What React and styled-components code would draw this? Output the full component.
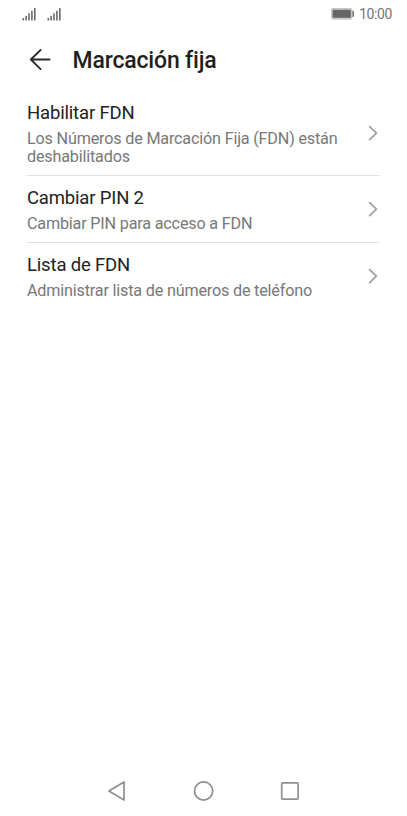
import React from 'react'
import styled, { createGlobalStyle } from 'styled-components'

const items = [
  {
    title: 'Habilitar FDN',
    text: 'Los Números de Marcación Fija (FDN) están deshabilitados',
    height: 84,
  },
  {
    title: 'Cambiar PIN 2',
    text: 'Cambiar PIN para acceso a FDN',
    height: 67,
  },
  {
    title: 'Lista de FDN',
    text: 'Administrar lista de números de teléfono',
    height: 67,
  },
]

const Signal = () => (
  <svg width='14' height='13' viewBox='0 0 14 13' fill='#6a6a6a'>
    <rect x='0.5' y='10' width='1.6' height='2.5' />
    <rect x='3.3' y='7.8' width='1.6' height='4.7' />
    <rect x='6.2' y='5.3' width='1.6' height='7.2' />
    <rect x='9.1' y='2.8' width='1.6' height='9.7' />
    <rect x='12' y='0.1' width='1.6' height='12.4' />
  </svg>
)

const Battery = () => (
  <svg width='24' height='12' viewBox='0 0 24 12'>
    <rect x='0.5' y='0.5' width='20.5' height='10.6' rx='1.5' fill='#ccc' stroke='#c4c4c4' />
    <rect x='1.7' y='1.8' width='18.1' height='8' fill='#666' />
    <rect x='21.4' y='3' width='1.6' height='5.8' fill='#777' />
  </svg>
)

const App = () => {
  return (
    <>
      <GlobalStyle />
      <Screen>
        <StatusBar>
          <Signals>
            <Signal />
            <Signal />
          </Signals>
          <Clock>
            <Battery />
            <span>10:00</span>
          </Clock>
        </StatusBar>

        <Header>
          <BackButton aria-label='Atrás'>
            <svg width='22' height='22' viewBox='0 0 22 22'>
              <path d='M20.6 10.5H1.8M11.6 1L1.8 10.5l9.8 9.6' />
            </svg>
          </BackButton>
          <h1>Marcación fija</h1>
        </Header>

        <List>
          {items.map((item) => (
            <Row key={item.title} $height={item.height}>
              <Label>
                <h2>{item.title}</h2>
                <p>{item.text}</p>
              </Label>
              <Chevron width='10' height='16' viewBox='0 0 10 16'>
                <path d='M1.6 1.6L8.4 8.2l-6.8 6.4' />
              </Chevron>
            </Row>
          ))}
        </List>

        <NavBar>
          <svg width='20' height='22' viewBox='0 0 20 22'>
            <path d='M17 2v18L1.9 11z' />
          </svg>
          <svg width='22' height='22' viewBox='0 0 22 22'>
            <circle cx='10.6' cy='11' r='9.1' />
          </svg>
          <svg width='20' height='22' viewBox='0 0 20 22'>
            <rect x='1.7' y='2.9' width='16.4' height='16.2' rx='0.8' />
          </svg>
        </NavBar>
      </Screen>
    </>
  )
}

const GlobalStyle = createGlobalStyle`
  * {
    box-sizing: border-box;
    margin: 0;
    padding: 0;
  }

  body {
    background: #fff;
    font-family: Roboto, 'Liberation Sans', sans-serif;
  }

  svg {
    display: block;
    flex-shrink: 0;
  }
`

const Screen = styled.div`
  display: flex;
  flex-direction: column;
  width: 407px;
  height: 816px;
  background: #fff;
  overflow: hidden;
`

const StatusBar = styled.div`
  display: flex;
  justify-content: space-between;
  align-items: center;
  height: 28px;
  padding: 0 15px 0 22px;
`

const Signals = styled.div`
  display: flex;
  gap: 10.5px;
`

const Clock = styled.div`
  display: flex;
  align-items: center;
  gap: 4px;
  color: #757575;
  font-size: 14px;
  line-height: 28px;
  letter-spacing: -0.4px;
`

const Header = styled.header`
  display: flex;
  align-items: center;
  height: 63px;
  padding-left: 29px;

  h1 {
    padding-top: 2px;
    color: #1f1f1f;
    font-size: 23px;
    font-weight: 500;
    line-height: 30px;
    letter-spacing: -0.17px;
  }
`

const BackButton = styled.button`
  margin-right: 21.5px;
  border: none;
  background: none;

  path {
    fill: none;
    stroke: #2a2a2a;
    stroke-width: 1.8;
    stroke-linecap: round;
    stroke-linejoin: round;
  }
`

const List = styled.ul`
  flex: 1;
  padding: 0 27px;
  list-style: none;
`

const Row = styled.li`
  display: flex;
  justify-content: space-between;
  align-items: center;
  height: ${(props) => props.$height}px;
  padding-right: 2px;

  & + & {
    border-top: 1px solid #e3e3e3;
  }
`

const Label = styled.div`
  width: 325px;
  padding-top: 2px;

  h2 {
    color: #222;
    font-size: 18.5px;
    font-weight: 400;
    line-height: 25px;
    letter-spacing: -0.17px;
  }

  p {
    color: #787878;
    font-size: 16.2px;
    line-height: 18.6px;
    letter-spacing: -0.19px;
    padding-top: 3.5px;
  }
`

const Chevron = styled.svg`
  path {
    fill: none;
    stroke: #a0a0a0;
    stroke-width: 1.8;
    stroke-linecap: round;
    stroke-linejoin: round;
  }
`

const NavBar = styled.nav`
  display: flex;
  justify-content: space-between;
  align-items: center;
  height: 50px;
  padding: 0 107px;

  svg {
    fill: none;
    stroke: #8f8f8f;
    stroke-width: 1.7;
    stroke-linejoin: round;
  }
`

export default App
